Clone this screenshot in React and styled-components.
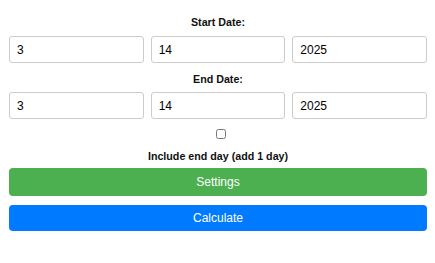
import styled, { createGlobalStyle } from 'styled-components'

// Global
const GlobalStyle = createGlobalStyle`
    body {
        margin: 0;
        background: #fff;
        font-family: "Liberation Sans", Arial, sans-serif;
    }
`

// Styles
const Form = styled.div`
    display: flex;
    flex-direction: column;
    padding: 15px 8px 0 9px;
`
const Label = styled.div`
    text-align: center;
    font-weight: bold;
    font-size: 10.7px;
    line-height: 14px;
    color: #111;
    margin-bottom: ${p => p.$mb || 0}px;
`
const DateRow = styled.div`
    display: grid;
    grid-template-columns: repeat(3, 1fr);
    gap: 7px;
    margin-bottom: ${p => p.$mb || 0}px;
`
const DateInput = styled.input`
    box-sizing: border-box;
    height: 27px;
    width: 100%;
    padding: 0 7px;
    border: 1px solid #ccc;
    border-radius: 3px;
    font-family: "Liberation Sans", Arial, sans-serif;
    font-size: 12px;
    color: #000;
    outline: none;
`
const CheckRow = styled.div`
    display: flex;
    justify-content: center;
    margin-bottom: 10px;
`
const Check = styled.input`
    margin: 0 0 0 5px;
    width: 10px;
    height: 10px;
`
const Button = styled.button`
    box-sizing: border-box;
    width: 100%;
    height: ${p => p.$h}px;
    border: none;
    border-radius: 4px;
    background: ${p => p.$bg};
    color: #fff;
    font-family: "Liberation Sans", Arial, sans-serif;
    font-size: 12px;
    margin-bottom: ${p => p.$mb || 0}px;
    cursor: pointer;
`

const App = () => {
    return (
        <>
            <GlobalStyle />
            <Form>
                <Label $mb={7}>Start Date:</Label>
                <DateRow $mb={9}>
                    <DateInput defaultValue="3" />
                    <DateInput defaultValue="14" />
                    <DateInput defaultValue="2025" />
                </DateRow>
                <Label $mb={6}>End Date:</Label>
                <DateRow $mb={10}>
                    <DateInput defaultValue="3" />
                    <DateInput defaultValue="14" />
                    <DateInput defaultValue="2025" />
                </DateRow>
                <CheckRow>
                    <Check type="checkbox" />
                </CheckRow>
                <Label $mb={5}>Include end day (add 1 day)</Label>
                <Button $bg="#4caf50" $h={28} $mb={9}>Settings</Button>
                <Button $bg="#007bff" $h={26}>Calculate</Button>
            </Form>
        </>
    )
}

export default App
